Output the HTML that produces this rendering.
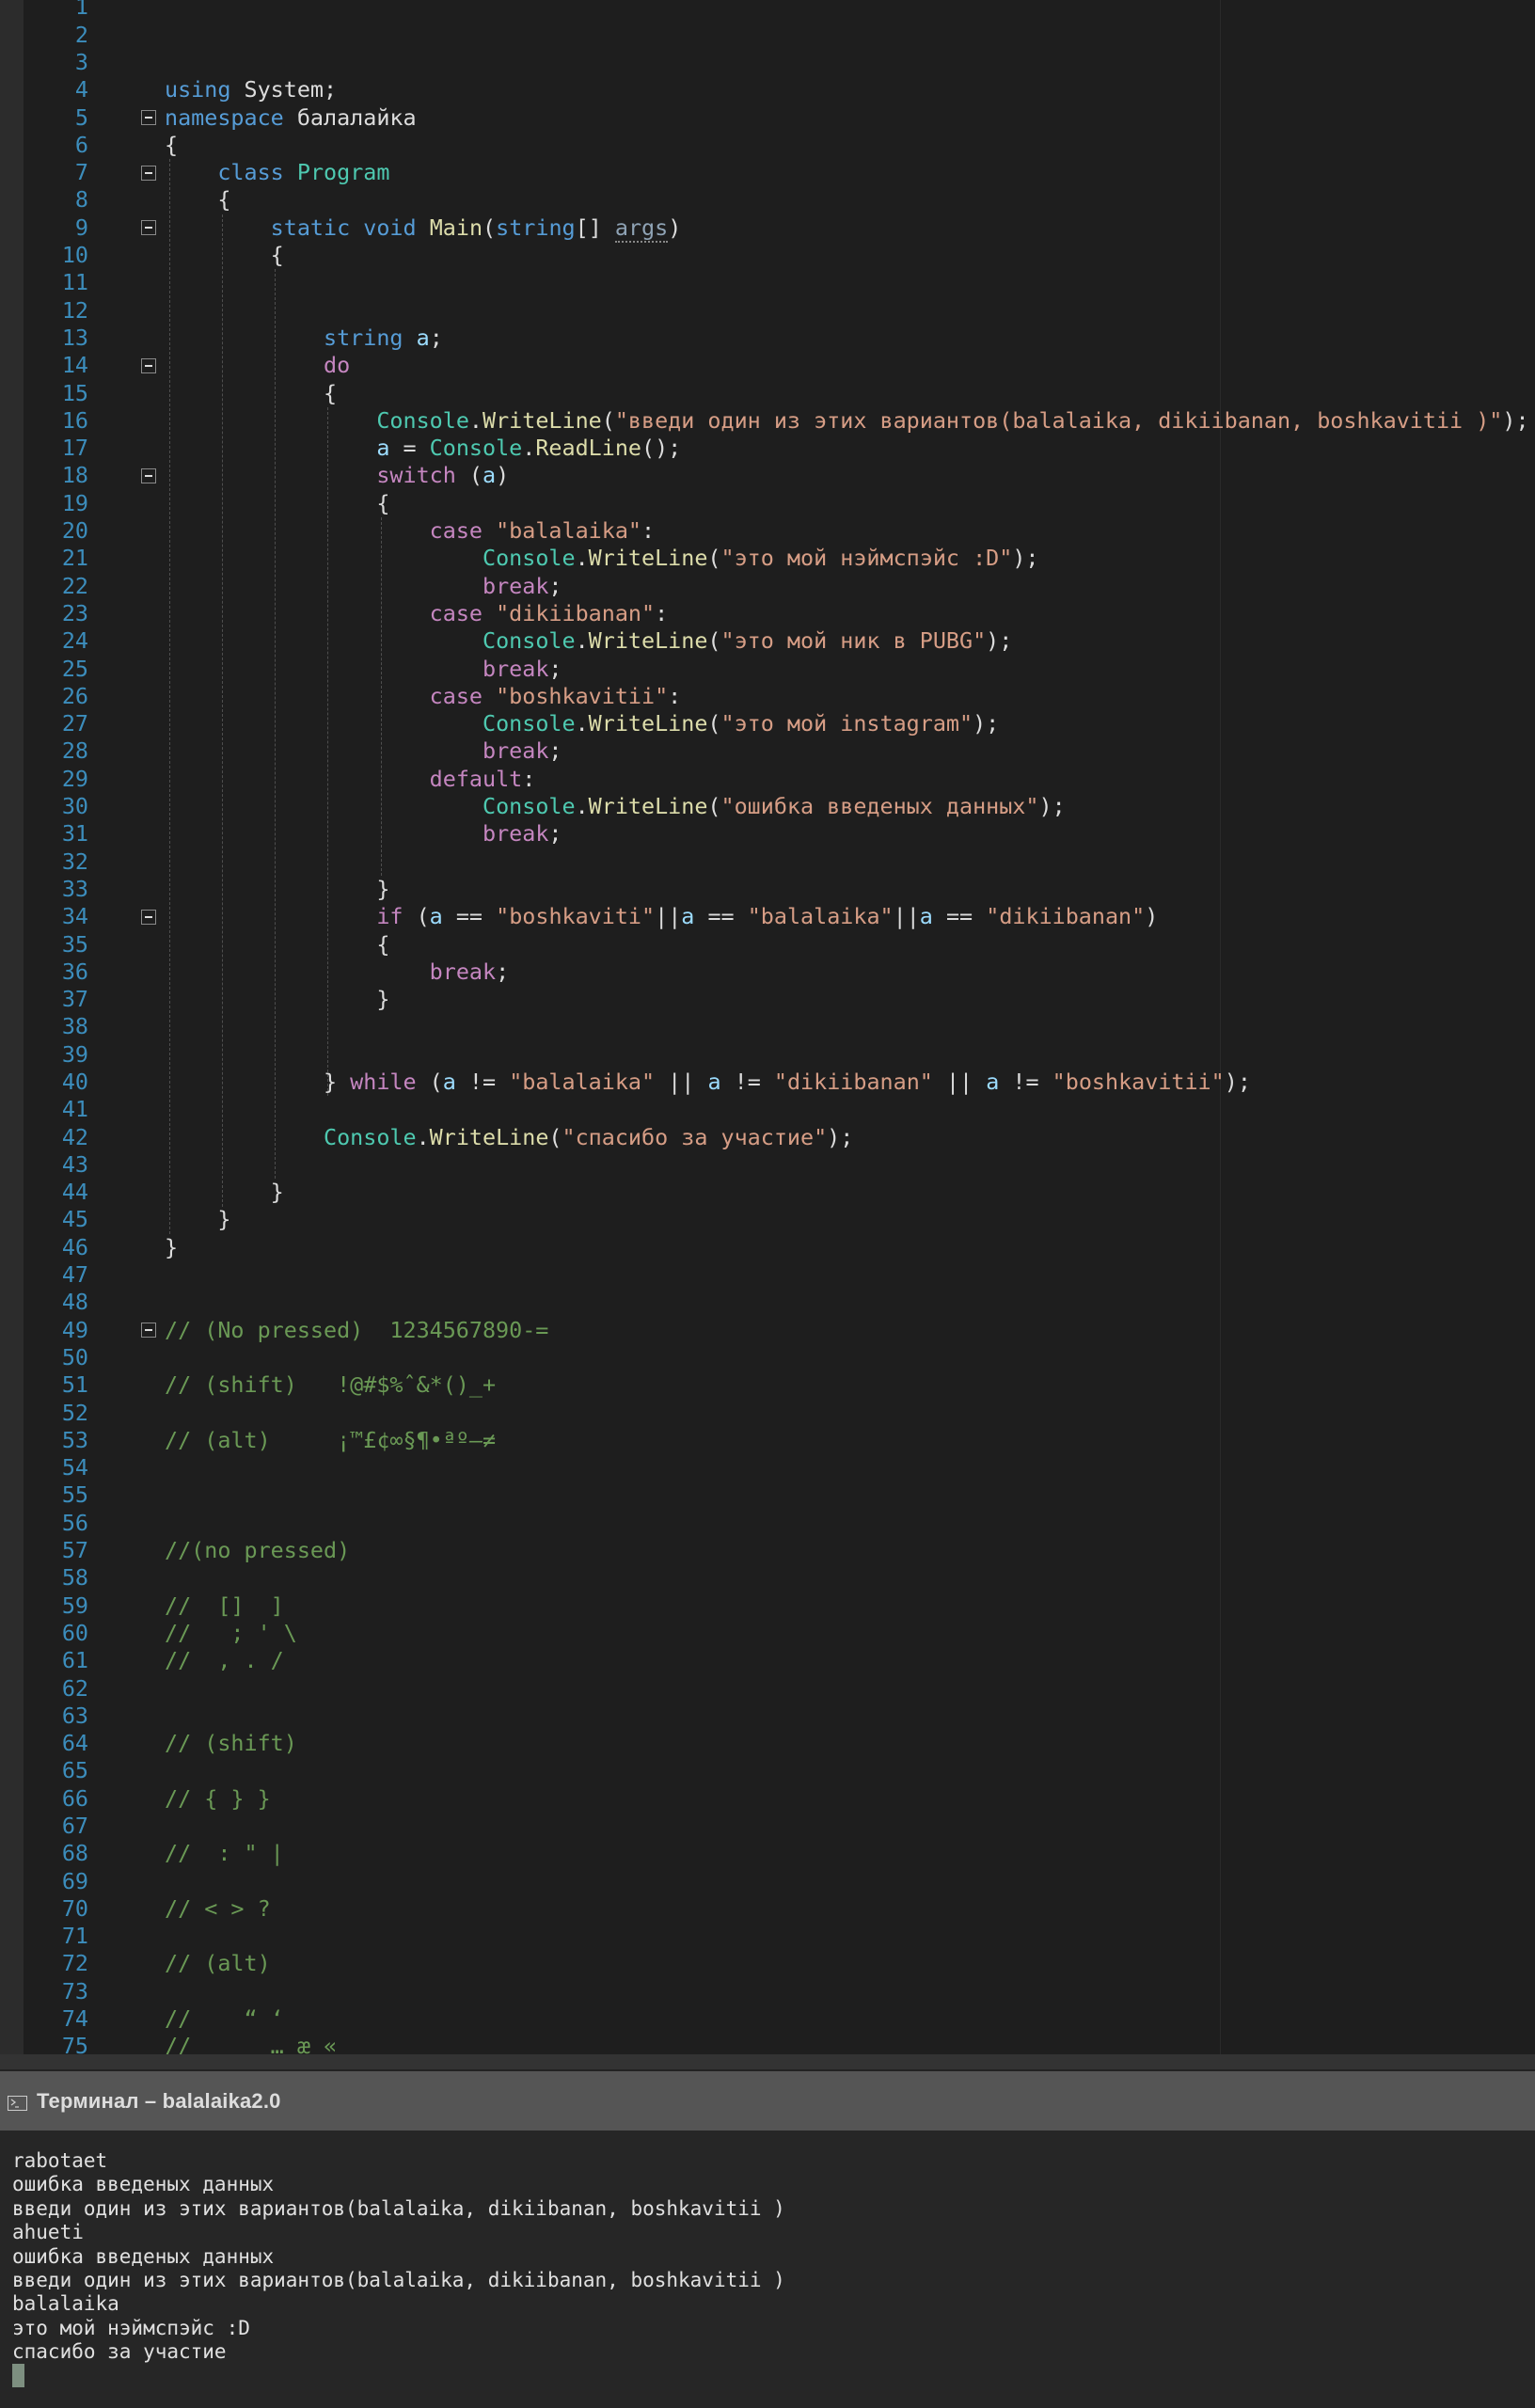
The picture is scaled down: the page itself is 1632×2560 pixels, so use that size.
<!DOCTYPE html>
<html><head><meta charset="utf-8"><style>
html,body{margin:0;padding:0;background:#1e1e1e;width:1632px;height:2560px;overflow:hidden}
#ed{position:absolute;left:0;top:0;width:1632px;height:2184px;overflow:hidden;background:#1e1e1e}
#strip{position:absolute;left:0;top:0;width:25px;height:2184px;background:#2c2c2c}
#vl{position:absolute;left:1297px;top:0;width:1px;height:2184px;background:#2a2a2a}
.ln,.cd{position:absolute;top:-6.6px;font-family:"DejaVu Sans Mono","Liberation Mono",monospace;font-size:23.4px;line-height:29.3px;white-space:pre;margin:0}
.ln{left:0;width:94px;text-align:right;color:#3c8dbc}
.cd{left:175px;color:#dcdcdc}
.fb{position:absolute;left:150px;width:14px;height:14px;border:1px solid #8a8a8a;box-sizing:content-box}
.fb:after{content:"";position:absolute;left:3px;top:6px;width:8px;height:2px;background:#ddd}
.g{position:absolute;width:0;border-left:1px dashed #4e4e4e}
.k{color:#569cd6}.t{color:#4ec9b0}.m{color:#dcdcaa}.s{color:#d69d85}.c{color:#c586c0}.cm{color:#6a9955}.v{color:#9cdcfe}
.u{border-bottom:2px dotted #888}
#sep{position:absolute;left:0;top:2184px;width:1632px;height:16px;background:#333}
#sep2{position:absolute;left:0;top:2200px;width:1632px;height:2px;background:#222}
#hd{position:absolute;left:0;top:2202px;width:1632px;height:63px;background:#555}
#hd .ttl{position:absolute;left:39px;top:19px;font-family:"Liberation Sans",sans-serif;font-weight:bold;font-size:22px;color:#ddd;letter-spacing:0.2px}
#hd .ic{position:absolute;left:8px;top:26px;width:19px;height:14px;border:1.5px solid #ccc}
#tm{position:absolute;left:0;top:2265px;width:1632px;height:295px;background:#262626}
#tm pre{position:absolute;left:13px;top:20px;margin:0;font-family:"DejaVu Sans Mono","Liberation Mono",monospace;font-size:21px;line-height:25.4px;color:#e0e0e0}
#cur{position:absolute;left:13px;top:248px;width:13px;height:25px;background:#7d8f80}
</style></head><body>
<div id="ed">
<div id="strip"></div>
<div id="vl"></div>
<div class="g" style="left:180px;top:169px;height:1143px"></div>
<div class="g" style="left:236px;top:228px;height:1055px"></div>
<div class="g" style="left:292px;top:286px;height:967px"></div>
<div class="g" style="left:348px;top:433px;height:732px"></div>
<div class="g" style="left:405px;top:550px;height:381px"></div>
<div class="fb" style="top:117px"></div>
<div class="fb" style="top:176px"></div>
<div class="fb" style="top:234px"></div>
<div class="fb" style="top:381px"></div>
<div class="fb" style="top:498px"></div>
<div class="fb" style="top:967px"></div>
<div class="fb" style="top:1406px"></div>
<pre class="ln">1
2
3
4
5
6
7
8
9
10
11
12
13
14
15
16
17
18
19
20
21
22
23
24
25
26
27
28
29
30
31
32
33
34
35
36
37
38
39
40
41
42
43
44
45
46
47
48
49
50
51
52
53
54
55
56
57
58
59
60
61
62
63
64
65
66
67
68
69
70
71
72
73
74
75</pre>
<pre class="cd">



<span class="k">using</span> System;
<span class="k">namespace</span> балалайка
{
    <span class="k">class</span> <span class="t">Program</span>
    {
        <span class="k">static</span> <span class="k">void</span> <span class="m">Main</span>(<span class="k">string</span>[] <span class="u" style="color:#8fa3b5">args</span>)
        {


            <span class="k">string</span> <span class="v">a</span>;
            <span class="c">do</span>
            {
                <span class="t">Console</span>.<span class="m">WriteLine</span>(<span class="s">"введи один из этих вариантов(balalaika, dikiibanan, boshkavitii )"</span>);
                <span class="v">a</span> = <span class="t">Console</span>.<span class="m">ReadLine</span>();
                <span class="c">switch</span> (<span class="v">a</span>)
                {
                    <span class="c">case</span> <span class="s">"balalaika"</span>:
                        <span class="t">Console</span>.<span class="m">WriteLine</span>(<span class="s">"это мой нэймспэйс :D"</span>);
                        <span class="c">break</span>;
                    <span class="c">case</span> <span class="s">"dikiibanan"</span>:
                        <span class="t">Console</span>.<span class="m">WriteLine</span>(<span class="s">"это мой ник в PUBG"</span>);
                        <span class="c">break</span>;
                    <span class="c">case</span> <span class="s">"boshkavitii"</span>:
                        <span class="t">Console</span>.<span class="m">WriteLine</span>(<span class="s">"это мой instagram"</span>);
                        <span class="c">break</span>;
                    <span class="c">default</span>:
                        <span class="t">Console</span>.<span class="m">WriteLine</span>(<span class="s">"ошибка введеных данных"</span>);
                        <span class="c">break</span>;

                }
                <span class="c">if</span> (<span class="v">a</span> == <span class="s">"boshkaviti"</span>||<span class="v">a</span> == <span class="s">"balalaika"</span>||<span class="v">a</span> == <span class="s">"dikiibanan"</span>)
                {
                    <span class="c">break</span>;
                }


            } <span class="c">while</span> (<span class="v">a</span> != <span class="s">"balalaika"</span> || <span class="v">a</span> != <span class="s">"dikiibanan"</span> || <span class="v">a</span> != <span class="s">"boshkavitii"</span>);

            <span class="t">Console</span>.<span class="m">WriteLine</span>(<span class="s">"спасибо за участие"</span>);

        }
    }
}


<span class="cm">// (No pressed)  1234567890-=</span>

<span class="cm">// (shift)   !@#$%ˆ&amp;*()_+</span>

<span class="cm">// (alt)     ¡™£¢∞§¶•ªº–≠</span>



<span class="cm">//(no pressed)</span>

<span class="cm">//  []  ]</span>
<span class="cm">//   ; ' \</span>
<span class="cm">//  , . /</span>


<span class="cm">// (shift)</span>

<span class="cm">// { } }</span>

<span class="cm">//  : " |</span>

<span class="cm">// &lt; &gt; ?</span>

<span class="cm">// (alt)</span>

<span class="cm">//    “ ‘</span>
<span class="cm">//      … æ «</span></pre>
</div>
<div id="sep"></div>
<div id="sep2"></div>
<div id="hd"><div class="ic"><svg width="19" height="14" style="position:absolute;left:0;top:0"><path d="M3 3 L7 6 L3 9 M7 11 H11" stroke="#ccc" stroke-width="1.3" fill="none"/></svg></div><div class="ttl">Терминал – balalaika2.0</div></div>
<div id="tm"><pre>rabotaet
ошибка введеных данных
введи один из этих вариантов(balalaika, dikiibanan, boshkavitii )
ahueti
ошибка введеных данных
введи один из этих вариантов(balalaika, dikiibanan, boshkavitii )
balalaika
это мой нэймспэйс :D
спасибо за участие</pre><div id="cur"></div></div>
</body></html>
